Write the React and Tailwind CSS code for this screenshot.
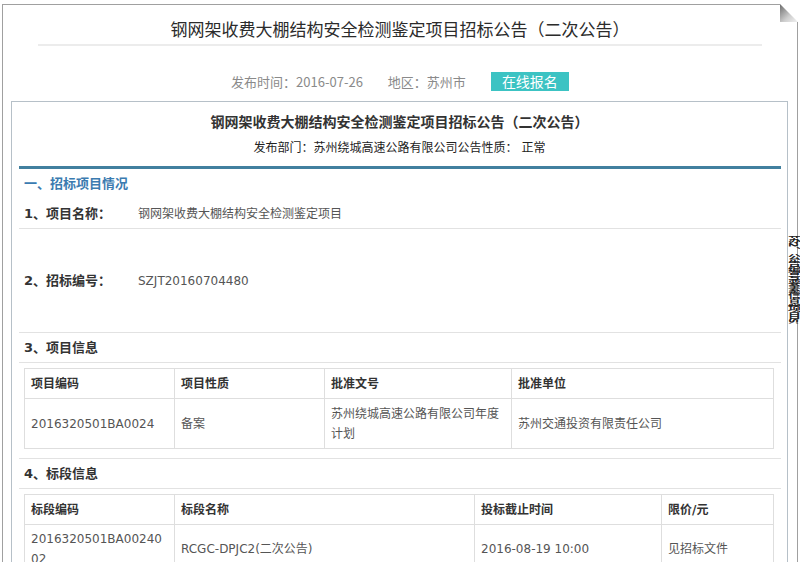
const font = { fontFamily: '"DejaVu Sans", "Noto Sans CJK SC", sans-serif' };

const projectCols = [
  { label: "项目编码", width: "w-[150px]" },
  { label: "项目性质", width: "w-[150px]" },
  { label: "批准文号", width: "w-[187px]" },
  { label: "批准单位", width: "w-[262px]" },
];

const projectRow = ["2016320501BA0024", "备案", "苏州绕城高速公路有限公司年度计划", "苏州交通投资有限责任公司"];

const sectionCols = [
  { label: "标段编码", width: "w-[150px]" },
  { label: "标段名称", width: "w-[300px]" },
  { label: "投标截止时间", width: "w-[187px]" },
  { label: "限价/元", width: "w-[112px]" },
];

const sectionRow = ["2016320501BA0024002", "RCGC-DPJC2(二次公告)", "2016-08-19 10:00", "见招标文件"];

function InfoTable({ cols, row, headClass, rowClass }) {
  return (
    <table className="ml-[5px] mt-[5px] border-collapse table-fixed w-[749px] text-[12px]">
      <thead>
        <tr className={headClass}>
          {cols.map((c) => (
            <th
              key={c.label}
              className={`${c.width} border border-[#dedede] pl-[6px] text-left font-bold text-[#333]`}
            >
              {c.label}
            </th>
          ))}
        </tr>
      </thead>
      <tbody>
        <tr className={rowClass}>
          {row.map((v, i) => (
            <td
              key={i}
              className="border border-[#dedede] pl-[6px] pr-[9px] py-[4px] align-middle leading-[20px] text-[#555] break-all"
            >
              {v}
            </td>
          ))}
        </tr>
      </tbody>
    </table>
  );
}

export default function App() {
  return (
    <div className="w-[800px] h-[562px] overflow-hidden bg-white relative" style={font}>
      <div className="relative ml-[2px] mt-[4px] w-[796px] h-[620px] border-l border-t border-r border-[#a0a0a0]">
        {/* folded corner */}
        <svg className="absolute top-[-1px] right-[-1px]" width="18" height="18" viewBox="0 0 18 18">
          <defs>
            <linearGradient id="fold" x1="0" y1="0" x2="1" y2="1">
              <stop offset="0" stopColor="#6b6b6b" />
              <stop offset="0.6" stopColor="#cfcfcf" />
              <stop offset="1" stopColor="#f2f2f2" />
            </linearGradient>
          </defs>
          <rect width="18" height="18" fill="#fff" />
          <polygon points="0,0 0,18 18,18" fill="url(#fold)" />
        </svg>

        <h1
          className="pt-[12px] text-center text-[17px] leading-[24px] text-[#2b2b2b]"
          style={{ fontFamily: '"Noto Sans CJK SC", sans-serif' }}
        >
          钢网架收费大棚结构安全检测鉴定项目招标公告（二次公告）
        </h1>
        <div className="mx-[35px] mt-[3px] h-[2px] bg-[#ececec]" />

        <div
          className="mt-[26px] h-[19px] flex justify-center items-center text-[13px] text-[#8a8a8a]"
          style={{ fontFamily: '"Noto Sans CJK SC", sans-serif' }}
        >
          <span>发布时间：2016-07-26</span>
          <span className="ml-[25px]">地区：苏州市</span>
          <button className="ml-[25px] w-[78px] h-[19px] bg-[#3cc3c3] text-white text-[14px] leading-[19px]">
            在线报名
          </button>
        </div>

        <div className="ml-[8px] mt-[10px] w-[777px] h-[520px] border border-[#b6c0c8]">
          <div className="pt-[10px] text-center text-[14px] leading-[20px] font-bold text-[#333]">
            钢网架收费大棚结构安全检测鉴定项目招标公告（二次公告）
          </div>
          <div className="mt-[6px] text-center text-[12px] leading-[20px] text-[#222]">
            发布部门：苏州绕城高速公路有限公司公告性质： 正常
          </div>
          <div className="ml-[7px] mr-[6px] mt-[8px] h-[3px] bg-[#41809f]" />

          <div className="ml-[7px] mr-[6px]">
            <div className="h-[30px] leading-[30px] pl-[5px] text-[13px] font-bold text-[#3b7bb0]">
              一、招标项目情况
            </div>

            <div className="h-[30px] flex items-center border-b border-[#e2e2e2] text-[12px]">
              <span className="w-[119px] shrink-0 pl-[5px] font-bold text-[13px] text-[#333]">1、项目名称：</span>
              <span className="text-[#555]">钢网架收费大棚结构安全检测鉴定项目</span>
            </div>

            <div className="h-[104px] flex items-center border-b border-[#e2e2e2] text-[12px]">
              <span className="w-[119px] shrink-0 pl-[5px] font-bold text-[13px] text-[#333]">2、招标编号：</span>
              <span className="text-[#555]">SZJT20160704480</span>
            </div>

            <div className="pb-[9px] border-b border-[#e2e2e2]">
              <div className="h-[30px] leading-[30px] pl-[5px] border-b border-[#e2e2e2] text-[13px] font-bold text-[#333]">
                3、项目信息
              </div>
              <InfoTable cols={projectCols} row={projectRow} headClass="h-[30px]" rowClass="h-[50px]" />
            </div>

            <div className="h-[30px] leading-[30px] pl-[5px] border-b border-[#e2e2e2] text-[13px] font-bold text-[#333]">
              4、标段信息
            </div>
            <InfoTable cols={sectionCols} row={sectionRow} headClass="h-[30px]" rowClass="h-[48px]" />
          </div>
        </div>
      </div>

      {/* overflowing side text, squeezed into the narrow strip */}
      <div className="absolute left-[787px] top-[236px] w-[13px] h-[88px] overflow-hidden">
        <div className="origin-top scale-y-[0.5] whitespace-nowrap text-[13px] leading-[13px] font-bold text-[#222] [writing-mode:vertical-rl]">
          苏2、公告编号要素信息项目SZ
        </div>
      </div>
    </div>
  );
}
